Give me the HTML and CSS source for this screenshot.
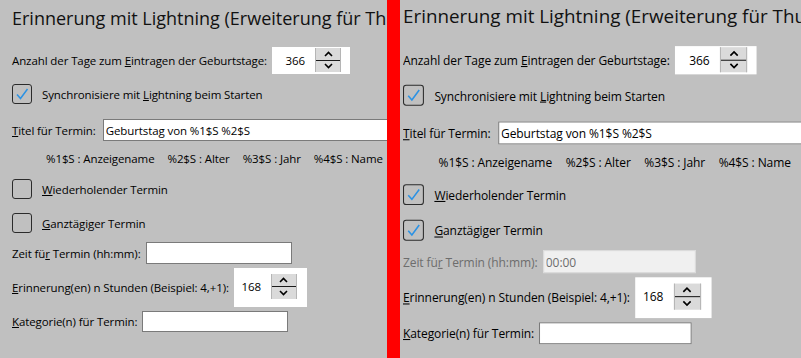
FILE: index.html
```html
<!DOCTYPE html>
<html lang="de">
<head>
    <meta charset="UTF-8">
    <title>Erinnerung mit Lightning</title>
    <link rel="stylesheet" href="styles.css">
</head>
<body>
    <div class="screen">
        <section class="panel panel-left">
            <div class="prefs">
                <h1>Erinnerung mit Lightning (Erweiterung für Thunderbird)</h1>
                <div class="row row-days">
                    <label>Anzahl der Tage zum <u>E</u>intragen der Geburtstage:</label>
                    <div class="spin spin-days">
                        <span class="spin-value">366</span>
                        <span class="spin-buttons">
                            <span class="spin-up"><svg width="9" height="6" viewBox="0 0 9 6"><path d="M1 5 L4.5 1.5 L8 5" fill="none" stroke="#000" stroke-width="1.6"/></svg></span>
                            <span class="spin-down"><svg width="9" height="6" viewBox="0 0 9 6"><path d="M1 1 L4.5 4.5 L8 1" fill="none" stroke="#000" stroke-width="1.6"/></svg></span>
                        </span>
                    </div>
                </div>
                <div class="row row-sync">
                    <span class="check is-checked"><svg width="18" height="18" viewBox="0 0 18 18"><path d="M4 9.5 L7.5 13.5 L14.5 4" fill="none" stroke="#2b92e4" stroke-width="1.5"/></svg></span>
                    <label>Synchronisiere mit <u>L</u>ightning beim Starten</label>
                </div>
                <div class="row row-title">
                    <label><u>T</u>itel für Termin:</label>
                    <input class="field field-title" type="text" value="Geburtstag von %1$S %2$S">
                </div>
                <div class="legend">
                    <span>%1$S : Anzeigename</span>
                    <span>%2$S : Alter</span>
                    <span>%3$S : Jahr</span>
                    <span>%4$S : Name</span>
                </div>
                <div class="row row-repeat">
                    <span class="check"></span>
                    <label><u>W</u>iederholender Termin</label>
                </div>
                <div class="row row-allday">
                    <span class="check"></span>
                    <label><u>G</u>anztägiger Termin</label>
                </div>
                <div class="row row-time">
                    <label>Zeit fü<u>r</u> Termin (hh:mm):</label>
                    <input class="field field-short" type="text" value="">
                </div>
                <div class="row row-remind">
                    <label><u>E</u>rinnerung(en) n Stunden (Beispiel: 4,+1):</label>
                    <div class="spin spin-remind">
                        <span class="spin-value">168</span>
                        <span class="spin-buttons">
                            <span class="spin-up"><svg width="9" height="6" viewBox="0 0 9 6"><path d="M1 5 L4.5 1.5 L8 5" fill="none" stroke="#000" stroke-width="1.6"/></svg></span>
                            <span class="spin-down"><svg width="9" height="6" viewBox="0 0 9 6"><path d="M1 1 L4.5 4.5 L8 1" fill="none" stroke="#000" stroke-width="1.6"/></svg></span>
                        </span>
                    </div>
                </div>
                <div class="row row-category">
                    <label><u>K</u>ategorie(n) für Termin:</label>
                    <input class="field field-category" type="text" value="">
                </div>
            </div>
        </section>

        <div class="divider"></div>

        <section class="panel panel-right">
            <div class="prefs">
                <h1>Erinnerung mit Lightning (Erweiterung für Thunderbird)</h1>
                <div class="row row-days">
                    <label>Anzahl der Tage zum <u>E</u>intragen der Geburtstage:</label>
                    <div class="spin spin-days">
                        <span class="spin-value">366</span>
                        <span class="spin-buttons">
                            <span class="spin-up"><svg width="9" height="6" viewBox="0 0 9 6"><path d="M1 5 L4.5 1.5 L8 5" fill="none" stroke="#000" stroke-width="1.6"/></svg></span>
                            <span class="spin-down"><svg width="9" height="6" viewBox="0 0 9 6"><path d="M1 1 L4.5 4.5 L8 1" fill="none" stroke="#000" stroke-width="1.6"/></svg></span>
                        </span>
                    </div>
                </div>
                <div class="row row-sync">
                    <span class="check is-checked"><svg width="18" height="18" viewBox="0 0 18 18"><path d="M4 9.5 L7.5 13.5 L14.5 4" fill="none" stroke="#2b92e4" stroke-width="1.5"/></svg></span>
                    <label>Synchronisiere mit <u>L</u>ightning beim Starten</label>
                </div>
                <div class="row row-title">
                    <label><u>T</u>itel für Termin:</label>
                    <input class="field field-title" type="text" value="Geburtstag von %1$S %2$S">
                </div>
                <div class="legend">
                    <span>%1$S : Anzeigename</span>
                    <span>%2$S : Alter</span>
                    <span>%3$S : Jahr</span>
                    <span>%4$S : Name</span>
                </div>
                <div class="row row-repeat">
                    <span class="check is-checked"><svg width="18" height="18" viewBox="0 0 18 18"><path d="M4 9.5 L7.5 13.5 L14.5 4" fill="none" stroke="#2b92e4" stroke-width="1.5"/></svg></span>
                    <label><u>W</u>iederholender Termin</label>
                </div>
                <div class="row row-allday">
                    <span class="check is-checked"><svg width="18" height="18" viewBox="0 0 18 18"><path d="M4 9.5 L7.5 13.5 L14.5 4" fill="none" stroke="#2b92e4" stroke-width="1.5"/></svg></span>
                    <label><u>G</u>anztägiger Termin</label>
                </div>
                <div class="row row-time is-disabled">
                    <label>Zeit fü<u>r</u> Termin (hh:mm):</label>
                    <input class="field field-short" type="text" value="00:00" disabled>
                </div>
                <div class="row row-remind">
                    <label><u>E</u>rinnerung(en) n Stunden (Beispiel: 4,+1):</label>
                    <div class="spin spin-remind">
                        <span class="spin-value">168</span>
                        <span class="spin-buttons">
                            <span class="spin-up"><svg width="9" height="6" viewBox="0 0 9 6"><path d="M1 5 L4.5 1.5 L8 5" fill="none" stroke="#000" stroke-width="1.6"/></svg></span>
                            <span class="spin-down"><svg width="9" height="6" viewBox="0 0 9 6"><path d="M1 1 L4.5 4.5 L8 1" fill="none" stroke="#000" stroke-width="1.6"/></svg></span>
                        </span>
                    </div>
                </div>
                <div class="row row-category">
                    <label><u>K</u>ategorie(n) für Termin:</label>
                    <input class="field field-category" type="text" value="">
                </div>
            </div>
        </section>
    </div>
</body>
</html>
```

FILE: styles.css
```css
* {
    box-sizing: border-box;
}
html, body {
    margin: 0;
    height: 100%;
}
body {
    background-color: #c0c0c0;
    font-family: "Open Sans", "Noto Sans", sans-serif;
    font-size: 11.5px;
    letter-spacing: -0.1px;
    color: #000000;
    overflow: hidden;
}
.screen {
    display: flex;
    height: 358px;
}
.panel {
    height: 100%;
    overflow: hidden;
}
.panel-left {
    width: 387px;
    flex: none;
}
.divider {
    width: 13px;
    flex: none;
    background-color: #ff0000;
}
.panel-right {
    flex: 1;
}
.prefs {
    width: 640px;
    padding-left: 12px;
}
.panel-right .prefs {
    padding-left: 3px;
    transform: scale(1.046);
    transform-origin: 3px 61px;
}
.prefs h1 {
    margin: 5px 0 0;
    font-size: 18px;
    font-weight: 500;
    line-height: 26px;
    letter-spacing: 0;
    white-space: nowrap;
    color: #111111;
}
.row {
    display: flex;
    align-items: center;
    white-space: nowrap;
}
.row label {
    margin-right: 5px;
}
.row-days {
    margin-top: 16px;
    height: 27px;
}
.row-sync {
    margin-top: 10px;
    height: 20px;
}
.row-title {
    margin-top: 15px;
    height: 22px;
}
.row-title label {
    margin-right: 7px;
}
.legend {
    display: flex;
    align-items: center;
    gap: 13px;
    height: 16px;
    margin-top: 9px;
    padding-left: 34px;
    white-space: nowrap;
}
.row-repeat {
    margin-top: 13px;
    height: 20px;
}
.row-allday {
    margin-top: 14px;
    height: 20px;
}
.row-time {
    margin-top: 9px;
    height: 22px;
}
.row-remind {
    margin-top: 4px;
    height: 39px;
}
.row-category {
    margin-top: 4px;
    height: 21px;
}
.check {
    width: 20px;
    height: 20px;
    flex: none;
    margin-right: 10px;
    border: 1px solid #2b2b2b;
    border-radius: 3px;
    display: flex;
    align-items: center;
    justify-content: center;
}
.field {
    height: 100%;
    padding: 0 2px;
    border: 1px solid #7a7a7a;
    background-color: #ffffff;
    font: inherit;
    letter-spacing: inherit;
    color: #000000;
    outline: none;
}
.field-title {
    width: 420px;
}
.field-short {
    width: 146px;
}
.field-category {
    width: 146px;
}
.is-disabled label {
    color: #6d6d6d;
}
.is-disabled .field {
    background-color: #f0f0f0;
    border-color: #d9d9d9;
    color: #6d6d6d;
}
.spin {
    display: flex;
    align-items: center;
    background-color: #ffffff;
}
.spin-value {
    text-align: right;
    padding-right: 10px;
}
.spin-days {
    width: 78px;
    height: 27px;
    padding: 1px 9px 2px 0;
}
.spin-days .spin-value {
    width: 43px;
}
.spin-remind {
    width: 73px;
    height: 39px;
    padding: 6px 10px 8px 0;
}
.spin-remind .spin-value {
    width: 37px;
}
.spin-buttons {
    width: 26px;
    height: 100%;
    display: flex;
    flex-direction: column;
    background-color: #dadada;
    border-left: 1px solid #b5b5b5;
    border-right: 1px solid #b5b5b5;
}
.spin-up,
.spin-down {
    flex: 1;
    display: flex;
    align-items: center;
    justify-content: center;
}
.spin-up {
    border-bottom: 1px solid #1a1a1a;
}
```
